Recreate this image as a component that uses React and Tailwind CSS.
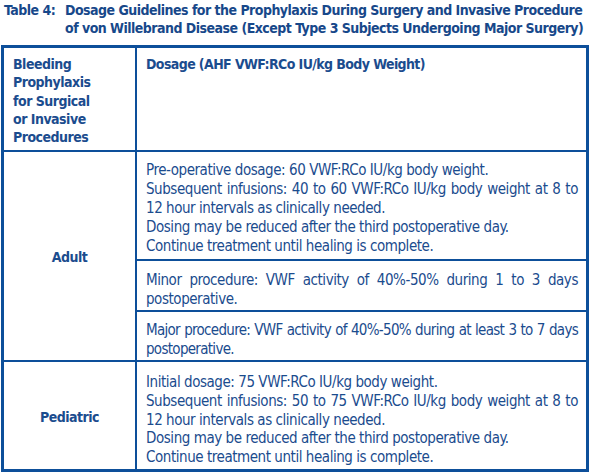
import React from "react";

const F = { fontFamily: '"DejaVu Sans Condensed", "Liberation Sans Narrow", "Liberation Sans", sans-serif' };

export default function App() {
  return (
    <div className="w-[592px] h-[475px] bg-white text-[#1b4c8e] overflow-hidden" style={F}>
      <div className="flex pt-[1px] pl-[4px] h-[45px] font-bold text-[14px] leading-[18px] tracking-[-0.52px] text-[#17488a] whitespace-nowrap">
        <div className="w-[61px] shrink-0">Table 4:</div>
        <div>
          Dosage Guidelines for the Prophylaxis During Surgery and Invasive Procedure
          <br />
          of von Willebrand Disease (Except Type 3 Subjects Undergoing Major Surgery)
        </div>
      </div>
      <div className="ml-[1px] w-[588px] border-[3px] border-[#0d4f9a] flex flex-col text-[15px] leading-[19px] tracking-[-0.45px]">
        <div className="flex h-[104px] border-b-2 border-[#0d4f9a]">
          <div className="w-[133px] shrink-0 border-r-2 border-[#0d4f9a] pl-[9px] pt-[7px] font-bold text-[14px] tracking-[-0.5px] leading-[18.3px]">
            Bleeding<br />Prophylaxis<br />for Surgical<br />or Invasive<br />Procedures
          </div>
          <div className="flex-1 pl-[9px] pt-[7px] font-bold text-[14px] tracking-[-0.6px]">
            Dosage (AHF VWF:RCo IU/kg Body Weight)
          </div>
        </div>
        <div className="flex border-b-2 border-[#0d4f9a]">
          <div className="w-[133px] shrink-0 border-r-2 border-[#0d4f9a] flex items-center justify-center pt-[3px] font-bold text-[14px] tracking-[-0.5px]">
            Adult
          </div>
          <div className="flex-1 flex flex-col">
            <div className="h-[109px] border-b-2 border-[#0d4f9a] pl-[9px] pr-[8px] pt-[9px] text-justify">
              Pre-operative dosage: 60 VWF:RCo IU/kg body weight.<br />
              Subsequent infusions: 40 to 60 VWF:RCo IU/kg body weight at 8 to 12 hour intervals as clinically needed.<br />
              Dosing may be reduced after the third postoperative day.<br />
              Continue treatment until healing is complete.
            </div>
            <div className="h-[51px] border-b-2 border-[#0d4f9a] pl-[9px] pr-[8px] pt-[10px] text-justify">
              Minor procedure: VWF activity of 40%-50% during 1 to 3 days postoperative.
            </div>
            <div className="h-[48px] pl-[9px] pr-[8px] pt-[9px] text-justify tracking-[-0.7px]">
              Major procedure: VWF activity of 40%-50% during at least 3 to 7 days postoperative.
            </div>
          </div>
        </div>
        <div className="flex h-[107px]">
          <div className="w-[133px] shrink-0 border-r-2 border-[#0d4f9a] flex items-center justify-center pt-[4px] font-bold text-[14px] tracking-[-0.5px]">
            Pediatric
          </div>
          <div className="flex-1 pl-[9px] pr-[8px] pt-[11px] leading-[18.8px] text-justify">
            Initial dosage: 75 VWF:RCo IU/kg body weight.<br />
            Subsequent infusions: 50 to 75 VWF:RCo IU/kg body weight at 8 to 12 hour intervals as clinically needed.<br />
            Dosing may be reduced after the third postoperative day.<br />
            Continue treatment until healing is complete.
          </div>
        </div>
      </div>
    </div>
  );
}
